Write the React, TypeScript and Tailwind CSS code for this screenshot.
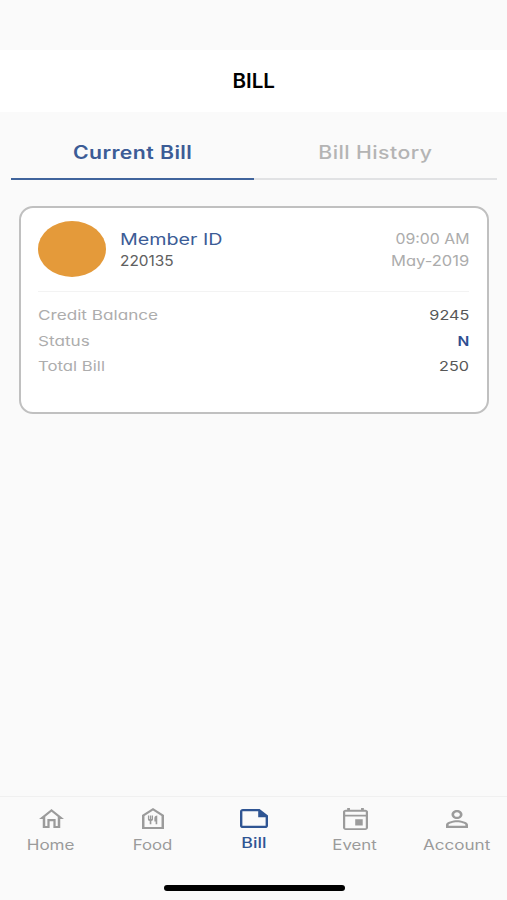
import type { ReactNode } from "react";

type NavItem = { label: string; active?: boolean; scale: string; icon: ReactNode };

const navItems: NavItem[] = [
  {
    label: "Home",
    scale: "scale-x-[1.22]",
    icon: (
      <svg className="h-[19px] w-[25px]" viewBox="2 3 20 17" preserveAspectRatio="none" fill="currentColor">
        <path d="M12 5.500l5 4.500V18.100h-1.700V12H8.700v6.100H7V10l5-4.500M12 3L2 12h3v8h5.500v-6.100h3V20H19v-8h3L12 3z" />
      </svg>
    ),
  },
  {
    label: "Food",
    scale: "scale-x-[1.2]",
    icon: (
      <svg className="h-[21px] w-[22px]" viewBox="4 3 16 18" preserveAspectRatio="none" fill="currentColor">
        <path d="M12 5.200l6.200 4.600v9.400H5.800V9.800L12 5.200M12 3L4 9v12h16V9L12 3z" />
        <path d="M12 9.500v3.200c0 .800-.500 1.300-1.200 1.500V17H9.600v-2.800c-.800-.200-1.300-.700-1.300-1.500V9.500h1v3h.500v-3h.900v3h.400v-3zM13 11.500v3h.900V17h1.200V9.500c-1.200 0-2.100.900-2.100 2z" />
      </svg>
    ),
  },
  {
    label: "Bill",
    active: true,
    scale: "scale-x-[1.27]",
    icon: (
      <svg className="h-[19px] w-[28px]" viewBox="2 4 20 16" preserveAspectRatio="none" fill="currentColor">
        <path d="M16 4H4c-1.100 0-2 .900-2 2v12c0 1.100.900 2 2 2h16c1.100 0 2-.900 2-2V9.500L16 4zM3.700 18.200V5.800H15v5.200h5.300v7.200H3.700z" />
      </svg>
    ),
  },
  {
    label: "Event",
    scale: "scale-x-[1.2]",
    icon: (
      <svg className="h-[22px] w-[25px]" viewBox="3 2 18 20" preserveAspectRatio="none" fill="currentColor">
        <path d="M19 3.500h-1V2h-2v1.500H8V2H6v1.500H5c-1.100 0-2 .900-2 2V20c0 1.100.900 2 2 2h14c1.100 0 2-.900 2-2V5.500c0-1.100-.900-2-2-2zM19.400 20.300H4.600V9.800h14.800v10.500zm0-12.200H4.600V5.300h14.800v2.800zM11.800 12.300h5.400v5.500h-5.400z" />
      </svg>
    ),
  },
  {
    label: "Account",
    scale: "scale-x-[1.22]",
    icon: (
      <svg className="h-[18px] w-[22px]" viewBox="4 4 16 16" preserveAspectRatio="none" fill="currentColor">
        <path d="M12 5.900c1.160 0 2.100.940 2.100 2.100s-.940 2.100-2.100 2.100S9.900 9.160 9.900 8s.940-2.100 2.100-2.100m0 9c2.970 0 6.100 1.460 6.100 2.100v1.100H5.900V17c0-.640 3.130-2.100 6.100-2.100M12 4C9.790 4 8 5.790 8 8s1.790 4 4 4 4-1.790 4-4-1.790-4-4-4zm0 9c-2.670 0-8 1.340-8 4v3h16v-3c0-2.660-5.330-4-8-4z" />
      </svg>
    ),
  },
];

const rows = [
  { label: "Credit Balance", value: "9245", scale: "scale-x-[1.27]", tone: "scale-x-[1.2] text-[#575757]" },
  { label: "Status", value: "N", scale: "scale-x-[1.27]", tone: "scale-x-[1.15] font-semibold text-[#2f4f91]" },
  { label: "Total Bill", value: "250", scale: "scale-x-[1.24]", tone: "scale-x-[1.2] text-[#575757]" },
];

export default function App() {
  return (
    <div className="flex h-[900px] w-[507px] flex-col overflow-hidden bg-[#fafafa] font-['Inter','Open_Sans',sans-serif] [font-feature-settings:'cv11']">
      <header className="mt-[50px] flex h-[62px] items-center justify-center bg-white">
        <h1 className="scale-x-[1.03] text-[20px] leading-6 font-semibold text-black">BILL</h1>
      </header>

      <div className="mr-[10px] ml-[11px] flex h-[68px]">
        <button className="flex flex-1 items-center justify-center border-b-2 border-[#40649c] pt-[14px] text-[18px] font-semibold text-[#3c5c96]">
          <span className="scale-x-[1.18] tracking-[0.02em]">Current Bill</span>
        </button>
        <button className="flex flex-1 items-center justify-center border-b-2 border-[#e1e2e4] pt-[14px] text-[18px] font-medium text-[#b4b4b4]">
          <span className="scale-x-[1.18] tracking-[0.02em]">Bill History</span>
        </button>
      </div>

      <section className="mr-[18px] ml-[19px] mt-[26px] flex h-[208px] flex-col rounded-[14px] border-2 border-[#c0c0c0] bg-white pr-[18px] pl-[17px] pt-[13px]">
        <div className="flex h-[71px] border-b border-[#f3f3f3]">
          <div className="h-[56px] w-[68px] rounded-[50%] bg-[#e49a3a]" />
          <div className="ml-[14px] flex flex-col items-start pt-[7px]">
            <span className="origin-left scale-x-[1.23] text-[16px] leading-[22px] text-[#3c5c96]">Member ID</span>
            <span className="origin-left scale-x-[1.1] text-[14px] leading-[21px] text-[#606060]">220135</span>
          </div>
          <div className="ml-auto flex flex-col items-end pt-[7px] text-[14px] text-[#acacac]">
            <span className="origin-right scale-x-[1.13] leading-[22px]">09:00 AM</span>
            <span className="origin-right scale-x-[1.18] leading-[21px]">May-2019</span>
          </div>
        </div>
        <dl className="pt-[11px] text-[13.500px] leading-[25.500px]">
          {rows.map((row) => (
            <div key={row.label} className="flex justify-between">
              <dt className={`origin-left text-[#adadad] ${row.scale}`}>{row.label}</dt>
              <dd className={`origin-right ${row.tone}`}>{row.value}</dd>
            </div>
          ))}
        </dl>
      </section>

      <nav className="mt-auto h-[104px] border-t border-[#f0f0f0]">
        <div className="flex h-[64px]">
          {navItems.map((item) => (
            <button
              key={item.label}
              className={`flex flex-1 flex-col items-center pt-[10px] ${item.active ? "font-medium text-[#2f5593]" : "text-[#9b9b9b]"}`}
            >
              <span className="ml-px flex h-[23px] items-center justify-center">{item.icon}</span>
              <span
                className={`text-[14px] leading-5 ${item.scale} ${item.active ? "mt-[3px]" : "mt-[5px]"}`}
              >
                {item.label}
              </span>
            </button>
          ))}
        </div>
        <div className="ml-[164px] mt-[24px] h-[6px] w-[181px] rounded-full bg-black" />
      </nav>
    </div>
  );
}
